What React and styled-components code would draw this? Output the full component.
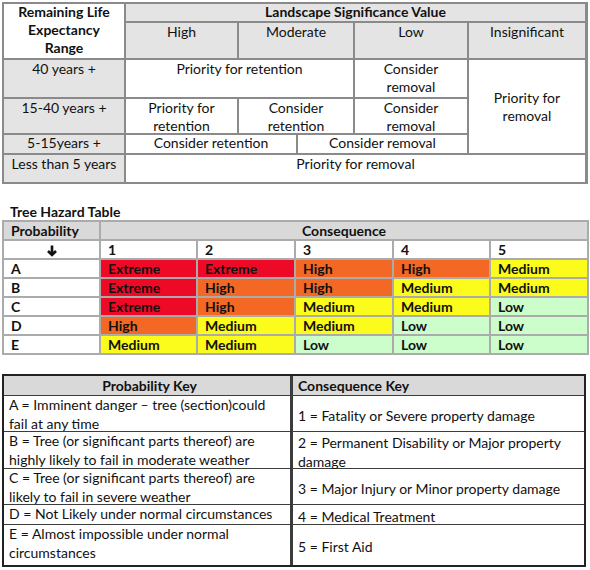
import React from 'react'
import styled, { createGlobalStyle } from 'styled-components'

const GlobalStyle = createGlobalStyle`
    body {
        margin: 0;
        background: #fff;
    }
`

const Page = styled.div`
    width: 590px;
    padding: 2px 0 0 2px;
    box-sizing: border-box;
    display: flex;
    flex-direction: column;
    font-family: Lato, "Liberation Sans", sans-serif;
    font-size: 14px;
    color: #111;
`

// life expectancy table
const LifeGrid = styled.div`
    display: grid;
    width: 586px;
    box-sizing: border-box;
    grid-template-columns: 120px 111px 57px 55px 112px 116px;
    grid-template-rows: 17px 35px 37px 34px 18px 27px;
    gap: 2px;
    padding: 2px;
    background: #8a8a8a;
`

const LifeCell = styled.div`
    grid-column: ${p => p.$col};
    grid-row: ${p => p.$row};
    background: ${p => (p.$shade ? '#e4e4e4' : '#fff')};
    font-weight: ${p => (p.$bold ? 700 : 400)};
    text-align: center;
    line-height: 18px;
    white-space: nowrap;
    display: flex;
    flex-direction: column;
    justify-content: ${p => (p.$middle ? 'center' : 'flex-start')};
    min-height: 0;
    & > div:first-child {
        margin-top: ${p => (p.$lift ? '-1px' : '0')};
    }
`

const Title = styled.div`
    margin-top: 19px;
    padding-left: 8px;
    font-weight: 700;
    line-height: 17px;
`

// hazard table
const HazardGrid = styled.div`
    display: grid;
    width: 587px;
    box-sizing: border-box;
    grid-template-columns: 95px 95px 96px 96px 95px 96px;
    grid-template-rows: repeat(7, 17px);
    gap: 2px;
    padding: 2px;
    background: #ababab;
    font-weight: 700;
`

const levelColors = {
    Extreme: '#ee0a26',
    High: '#f26824',
    Medium: '#fbfb1c',
    Low: '#ccfecc',
}

const HazardCell = styled.div`
    grid-column: ${p => p.$col || 'auto'};
    background: ${p => p.$bg || '#fff'};
    line-height: 18px;
    padding-left: ${p => (p.$center ? '0' : '7px')};
    text-align: ${p => (p.$center ? 'center' : 'left')};
    white-space: nowrap;
`

const ArrowIcon = () => (
    <svg width="10" height="12" viewBox="0 0 10 12" style={{ verticalAlign: '-2px' }}>
        <path d="M5 0.5 V10 M1 6 L5 10 L9 6" fill="none" stroke="#111" strokeWidth="2.6" />
    </svg>
)

// key table
const KeyGrid = styled.div`
    margin-top: 19px;
    display: grid;
    width: 584px;
    box-sizing: border-box;
    grid-template-columns: 286px 291px;
    grid-template-rows: 19px 35px 36px 35px 19px 40px;
    column-gap: 3px;
    row-gap: 1px;
    border: 2px solid #222;
    background: #3c3c3c;
`

const KeyHead = styled.div`
    background: #d9d9d9;
    font-weight: 700;
    line-height: 19px;
    padding-left: 5px;
    text-align: ${p => (p.$center ? 'center' : 'left')};
`

const ProbText = styled.div`
    background: #fff;
    line-height: 19px;
    padding-left: 5px;
    white-space: nowrap;
    min-height: 0;
    & > div:first-child {
        margin-top: -1px;
    }
`

const ConsText = styled.div`
    background: #fff;
    line-height: 19px;
    padding: 3px 0 0 5px;
    box-sizing: border-box;
    display: flex;
    flex-direction: column;
    justify-content: center;
    white-space: nowrap;
    min-height: 0;
`

const hazardRows = [
    ['A', 'Extreme', 'Extreme', 'High', 'High', 'Medium'],
    ['B', 'Extreme', 'High', 'High', 'Medium', 'Medium'],
    ['C', 'Extreme', 'High', 'Medium', 'Medium', 'Low'],
    ['D', 'High', 'Medium', 'Medium', 'Low', 'Low'],
    ['E', 'Medium', 'Medium', 'Low', 'Low', 'Low'],
]

const keyRows = [
    [['A = Imminent danger \u2013 tree (section)could', 'fail at any time'], ['1 = Fatality or Severe property damage']],
    [['B = Tree (or significant parts thereof) are', 'highly likely to fail in moderate weather'], ['2 = Permanent Disability or Major property', 'damage']],
    [['C = Tree (or significant parts thereof) are', 'likely to fail in severe weather'], ['3 = Major Injury or Minor property damage']],
    [['D = Not Likely under normal circumstances'], ['4 = Medical Treatment']],
    [['E = Almost impossible under normal', 'circumstances'], ['5 = First Aid']],
]

const Lines = ({ lines }) => lines.map((l, i) => <div key={i}>{l}</div>)

const App = () => {
    return (
        <Page>
            <GlobalStyle />
            <LifeGrid>
                <LifeCell $col="1" $row="1 / 3" $bold $lift>
                    <Lines lines={['Remaining Life', 'Expectancy', 'Range']} />
                </LifeCell>
                <LifeCell $col="2 / 7" $row="1" $shade $bold $lift>
                    <div>Landscape Significance Value</div>
                </LifeCell>
                <LifeCell $col="2" $row="2" $shade>High</LifeCell>
                <LifeCell $col="3 / 5" $row="2" $shade>Moderate</LifeCell>
                <LifeCell $col="5" $row="2" $shade>Low</LifeCell>
                <LifeCell $col="6" $row="2" $shade>Insignificant</LifeCell>

                <LifeCell $col="1" $row="3" $shade>40 years +</LifeCell>
                <LifeCell $col="2 / 5" $row="3">Priority for retention</LifeCell>
                <LifeCell $col="5" $row="3"><Lines lines={['Consider', 'removal']} /></LifeCell>
                <LifeCell $col="6" $row="3 / 6" $middle><Lines lines={['Priority for', 'removal']} /></LifeCell>

                <LifeCell $col="1" $row="4" $shade>15-40 years +</LifeCell>
                <LifeCell $col="2" $row="4"><Lines lines={['Priority for', 'retention']} /></LifeCell>
                <LifeCell $col="3 / 5" $row="4"><Lines lines={['Consider', 'retention']} /></LifeCell>
                <LifeCell $col="5" $row="4"><Lines lines={['Consider', 'removal']} /></LifeCell>

                <LifeCell $col="1" $row="5" $shade $lift><div>5-15years +</div></LifeCell>
                <LifeCell $col="2 / 4" $row="5" $lift><div>Consider retention</div></LifeCell>
                <LifeCell $col="4 / 6" $row="5" $lift><div>Consider removal</div></LifeCell>

                <LifeCell $col="1" $row="6" $shade>Less than 5 years</LifeCell>
                <LifeCell $col="2 / 7" $row="6">Priority for removal</LifeCell>
            </LifeGrid>

            <Title>Tree Hazard Table</Title>
            <HazardGrid>
                <HazardCell $bg="#d9d9d9">Probability</HazardCell>
                <HazardCell $col="2 / 7" $bg="#d9d9d9" $center>Consequence</HazardCell>
                <HazardCell $center><ArrowIcon /></HazardCell>
                {[1, 2, 3, 4, 5].map(n => (
                    <HazardCell key={n}>{n}</HazardCell>
                ))}
                {hazardRows.map(([label, ...levels]) => (
                    <React.Fragment key={label}>
                        <HazardCell>{label}</HazardCell>
                        {levels.map((lv, i) => (
                            <HazardCell key={i} $bg={levelColors[lv]}>{lv}</HazardCell>
                        ))}
                    </React.Fragment>
                ))}
            </HazardGrid>

            <KeyGrid>
                <KeyHead $center>Probability Key</KeyHead>
                <KeyHead>Consequence Key</KeyHead>
                {keyRows.map(([prob, cons], i) => (
                    <React.Fragment key={i}>
                        <ProbText><Lines lines={prob} /></ProbText>
                        <ConsText><Lines lines={cons} /></ConsText>
                    </React.Fragment>
                ))}
            </KeyGrid>
        </Page>
    )
}

export default App
